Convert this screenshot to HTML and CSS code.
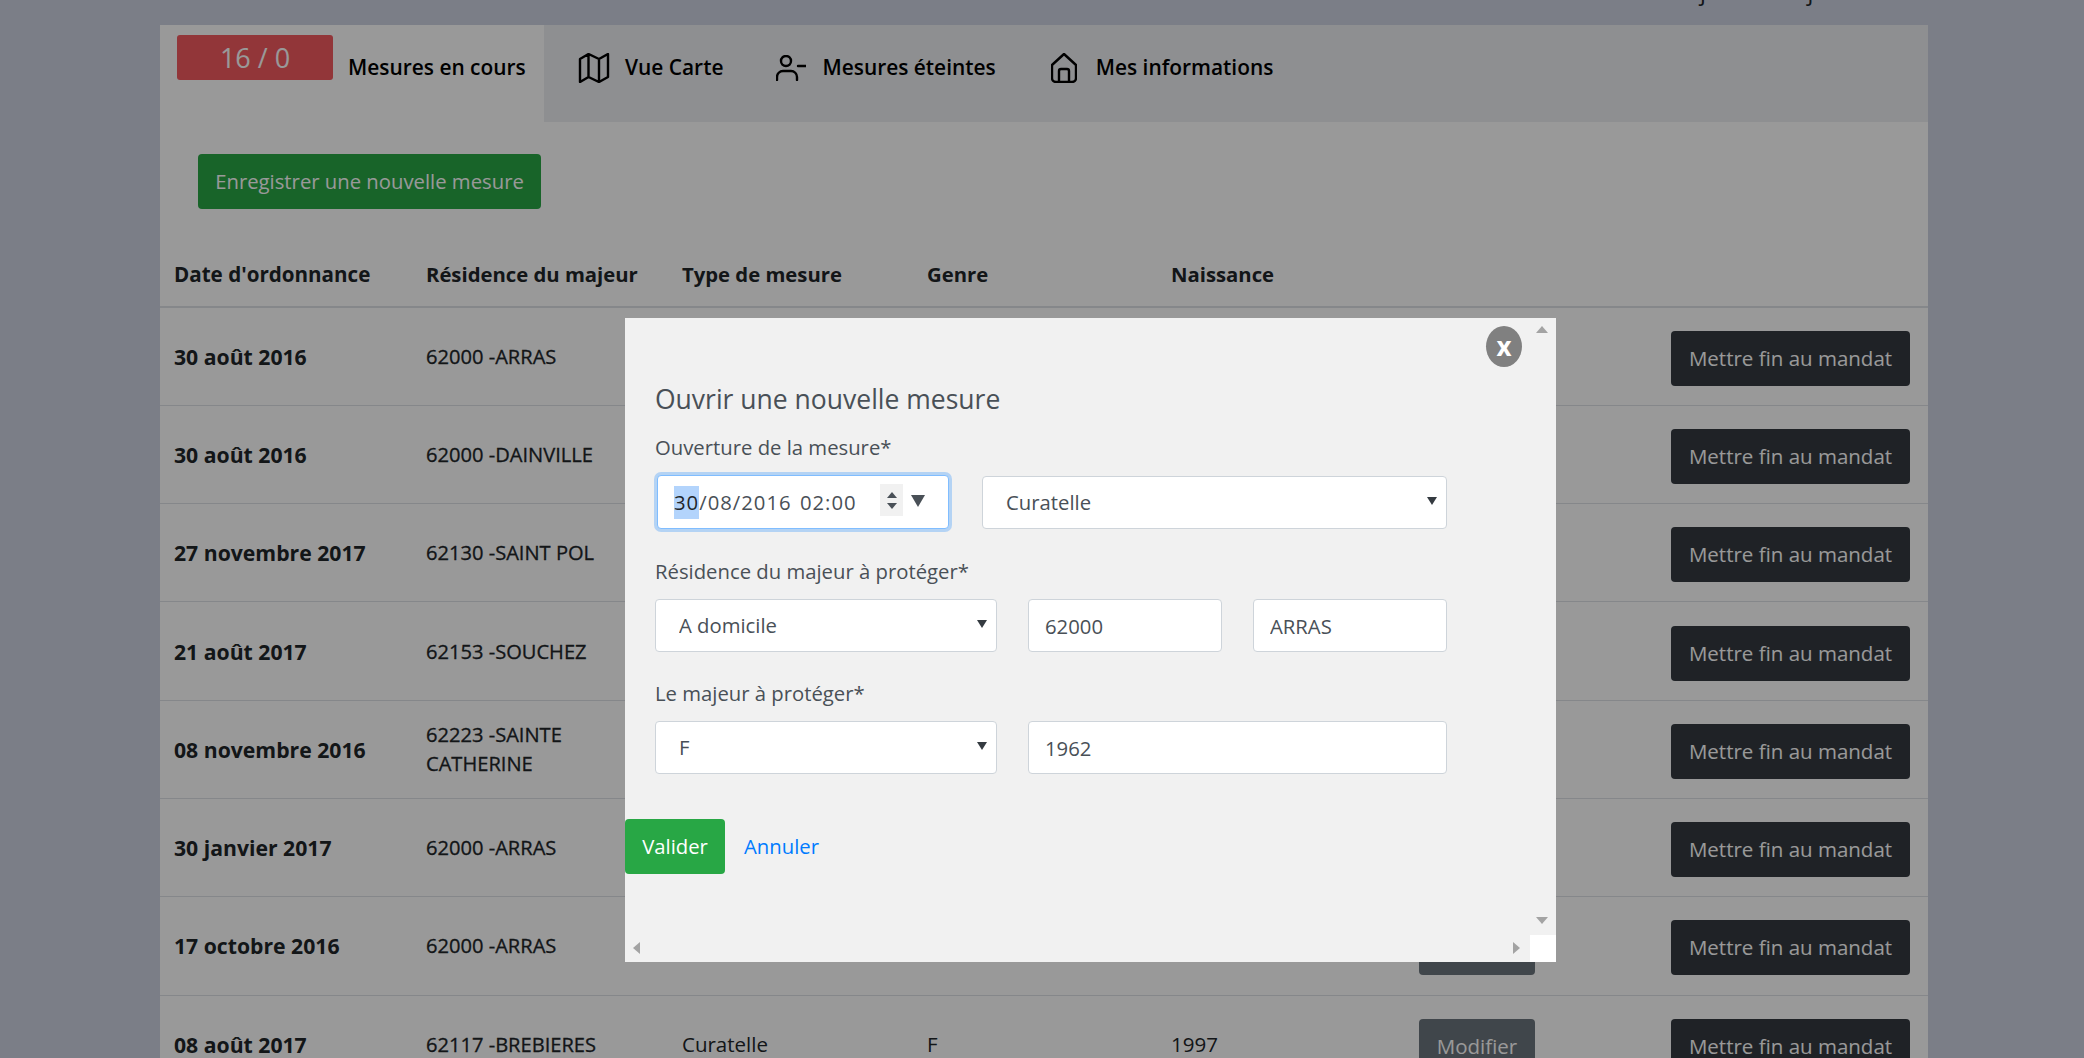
FILE: index.html
```html
<!DOCTYPE html>
<html lang="fr">
<head>
<meta charset="utf-8">
<title>Mesures en cours</title>
<link rel="stylesheet" href="styles.css">
</head>
<body>
<div class="updated"><span>Dernière mise à jour le 13 juillet 2018</span></div>
<main class="panel">
  <nav class="tabs">
    <div class="tab tab-active"><span class="badge">16 / 0</span><span class="tab-label">Mesures en cours</span></div>
    <div class="tab"><svg class="ico ico-map" viewBox="0 0 30 30"><path d="M1 6 9.500 1 20 6l9-5v23l-9 5-10.500-5L1 29zM9.500 1v23M20 6v23"/></svg><span class="tab-label">Vue Carte</span></div>
    <div class="tab"><svg class="ico ico-user" viewBox="0 0 30 26"><circle cx="10" cy="6" r="5"/><path d="M1 25v-3a6 6 0 0 1 6-6h8a6 6 0 0 1 6 6v3M22 11h8"/></svg><span class="tab-label">Mesures éteintes</span></div>
    <div class="tab"><svg class="ico ico-home" viewBox="0 0 26 30"><path d="M13 1 1 12v13a4 4 0 0 0 4 4h16a4 4 0 0 0 4-4V12zM8 29V18a2 2 0 0 1 2-2h6a2 2 0 0 1 2 2v11"/></svg><span class="tab-label">Mes informations</span></div>
  </nav>
  <div class="toolbar"><button class="btn btn-success">Enregistrer une nouvelle mesure</button></div>
  <table class="grid">
    <thead>
      <tr><th>Date d'ordonnance</th><th>Résidence du majeur</th><th>Type de mesure</th><th>Genre</th><th>Naissance</th><th></th><th></th></tr>
    </thead>
    <tbody>
      <tr><th>30 août 2016</th><td class="place">62000 -ARRAS</td><td>Curatelle</td><td>F</td><td>1962</td><td><button class="btn btn-secondary">Modifier</button></td><td><button class="btn btn-dark">Mettre fin au mandat</button></td></tr>
      <tr><th>30 août 2016</th><td class="place">62000 -DAINVILLE</td><td>Curatelle</td><td>F</td><td>1950</td><td><button class="btn btn-secondary">Modifier</button></td><td><button class="btn btn-dark">Mettre fin au mandat</button></td></tr>
      <tr><th>27 novembre 2017</th><td class="place">62130 -SAINT POL</td><td>Curatelle</td><td>H</td><td>1971</td><td><button class="btn btn-secondary">Modifier</button></td><td><button class="btn btn-dark">Mettre fin au mandat</button></td></tr>
      <tr><th>21 août 2017</th><td class="place">62153 -SOUCHEZ</td><td>Curatelle</td><td>F</td><td>1948</td><td><button class="btn btn-secondary">Modifier</button></td><td><button class="btn btn-dark">Mettre fin au mandat</button></td></tr>
      <tr><th>08 novembre 2016</th><td class="place">62223 -SAINTE CATHERINE</td><td>Curatelle</td><td>H</td><td>1983</td><td><button class="btn btn-secondary">Modifier</button></td><td><button class="btn btn-dark">Mettre fin au mandat</button></td></tr>
      <tr><th>30 janvier 2017</th><td class="place">62000 -ARRAS</td><td>Curatelle</td><td>F</td><td>1966</td><td><button class="btn btn-secondary">Modifier</button></td><td><button class="btn btn-dark">Mettre fin au mandat</button></td></tr>
      <tr><th>17 octobre 2016</th><td class="place">62000 -ARRAS</td><td>Curatelle</td><td>H</td><td>1959</td><td><button class="btn btn-secondary">Modifier</button></td><td><button class="btn btn-dark">Mettre fin au mandat</button></td></tr>
      <tr><th>08 août 2017</th><td class="place">62117 -BREBIERES</td><td>Curatelle</td><td>F</td><td>1997</td><td><button class="btn btn-secondary">Modifier</button></td><td><button class="btn btn-dark">Mettre fin au mandat</button></td></tr>
    </tbody>
  </table>
</main>
<div class="overlay"></div>
<section class="modal">
  <button class="close">x</button>
  <form class="modal-form">
    <h2 class="modal-title">Ouvrir une nouvelle mesure</h2>
    <label class="field-label">Ouverture de la mesure*</label>
    <div class="row row-first">
      <div class="date-field">
        <span class="date-text"><span class="date-sel">30</span>/08/2016 02:00</span>
        <span class="spin"><i class="tri-up"></i><i class="tri-down"></i></span>
        <i class="date-drop"></i>
      </div>
      <div class="select-wrap grow"><select class="control"><option>Curatelle</option></select></div>
    </div>
    <label class="field-label">Résidence du majeur à protéger*</label>
    <div class="row">
      <div class="select-wrap w-select"><select class="control"><option>A domicile</option></select></div>
      <input class="control input w-short" value="62000">
      <input class="control input w-short" value="ARRAS">
    </div>
    <label class="field-label">Le majeur à protéger*</label>
    <div class="row">
      <div class="select-wrap w-select"><select class="control"><option>F</option></select></div>
      <input class="control input grow" value="1962">
    </div>
  </form>
  <div class="modal-actions"><button class="btn btn-valid">Valider</button><a class="cancel" href="#">Annuler</a></div>
  <i class="sb sb-up"></i><i class="sb sb-down"></i><i class="sb sb-left"></i><i class="sb sb-right"></i><i class="sb-corner"></i>
</section>
</body>
</html>
```
FILE: styles.css
```css
* { box-sizing: border-box; }
html, body { height: 100%; }
body {
  margin: 0;
  height: 1058px;
  overflow: hidden;
  background: #cdd3e2;
  color: #212529;
  font-family: "Open Sans", "Noto Sans", sans-serif;
  font-size: 20.500px;
  line-height: 29px;
}
.updated { height: 25px; width: 1768px; margin-left: 160px; padding-right: 2px; display: flex; justify-content: flex-end; align-items: flex-start; overflow: hidden; font-size: 23.300px; }
.updated span { display: block; margin-top: -23px; white-space: nowrap; }
.panel { width: 1768px; margin-left: 160px; background: #fff; }
.tabs { height: 97px; display: flex; background: #edeef2; }
.tab { display: flex; align-items: flex-start; gap: 15px; padding-top: 28px; margin-right: 53px; font-size: 20.900px; font-weight: 600; color: #000; }
.tab-active { background: #fff; width: 384px; padding: 10px 0 0 17px; margin-right: 34px; gap: 15px; }
.tab-active .tab-label { margin-top: 18px; }
.tab:nth-child(3) { gap: 16px; margin-right: 55px; }
.tab:nth-child(4) { gap: 19px; }
.badge { width: 156px; height: 45px; border-radius: 3px; background: #f35a5f; color: #fff; font-size: 27px; font-weight: 400; line-height: 45px; text-align: center; }
.ico { fill: none; stroke: #000; stroke-width: 2.400; stroke-linejoin: round; stroke-linecap: round; }
.ico-map { width: 32px; height: 30px; }
.ico-user { width: 30px; height: 26px; margin-top: 2px; }
.ico-home { width: 26px; height: 30px; }
.toolbar { padding: 32px 38px 0; height: 121px; }
.btn { border: 1px solid transparent; border-radius: 4px; padding: 12px 17px; font: inherit; line-height: 29px; white-space: nowrap; height: 55px; color: #fff; }
.btn-success { background: #28a745; width: 343px; padding: 12px 0; font-size: 20.300px; }
.btn-secondary { background: #6c757d; width: 116px; padding: 12px 0; }
.btn-dark { background: #343a40; width: 239px; padding: 12px 0; }
.btn-valid { background: #28a745; width: 100px; padding: 12px 0; }
.grid { width: 1768px; border-collapse: collapse; table-layout: fixed; }
.grid th, .grid td { padding: 0 14px; text-align: left; vertical-align: middle; }
.grid thead th { height: 64px; border-bottom: 2px solid #dee2e6; font-size: 20.300px; font-weight: 700; }
.grid thead th:first-child { font-size: 20.600px; }
.grid tbody th, .grid tbody td { height: 98.300px; border-bottom: 1px solid #dee2e6; }
.grid tbody th { font-size: 21.200px; font-weight: 700; }
.grid .place { font-size: 20.100px; -webkit-text-stroke: .3px #212529; }
.grid .btn { margin-top: 4px; }
.grid th:nth-child(1) { width: 252px; }
.grid th:nth-child(2) { width: 256px; }
.grid th:nth-child(3) { width: 245px; }
.grid th:nth-child(4) { width: 244px; }
.grid th:nth-child(5) { width: 246px; }
.grid th:nth-child(6) { width: 252px; }
.grid td:nth-child(6) { padding: 0 16px; }
.grid td:nth-child(7) { padding: 0 18px 0 16px; text-align: right; }
.overlay { position: fixed; inset: 0; background: rgba(0, 0, 0, .4); }
.modal { position: fixed; left: 625px; top: 318px; width: 931px; height: 644px; background: #f1f1f1; color: #495057; font-size: 20.300px; }
.modal-form { padding: 61px 109px 0 30px; }
.modal-title { margin: 0 0 14px; font-size: 26.500px; line-height: 40px; font-weight: 400; color: #495057; }
.field-label { display: block; height: 29px; line-height: 29px; color: #495057; }
.row { display: flex; gap: 31px; margin: 13px 0 27px; align-items: center; }
.row-first { gap: 33px; margin: 13px 0 28px; }
.grow { flex: 1; }
.w-select { width: 342px; }
.control { display: block; width: 100%; height: 53px; padding: 0 16px 0 23px; border: 1px solid #ced4da; border-radius: 4px; background: #fff; color: #495057; font: inherit; appearance: none; }
.input { padding-left: 16px; }
.row .input.w-short { width: 194px; }
.row .input.grow { flex: 1; width: auto; }
.select-wrap { position: relative; }
.select-wrap::after { content: ""; position: absolute; right: 10px; top: 21px; border: 5px solid transparent; border-top: 8px solid #343a40; border-bottom: 0; }
.date-field { width: 292px; height: 54px; margin-left: 2px; display: flex; align-items: center; background: #fff; border: 1px solid #80bdff; border-radius: 4px; box-shadow: 0 0 0 3px rgba(0, 123, 255, .25); padding-left: 16px; }
.date-text { width: 206px; color: #495057; white-space: pre; letter-spacing: 1px; word-spacing: 2px; }
.date-sel { display: inline-block; background: #b3d4fc; color: #212529; height: 33px; line-height: 33px; }
.spin { width: 23px; height: 32px; margin-top: -4px; background: #f1f1f1; display: flex; flex-direction: column; align-items: center; justify-content: center; gap: 5px; }
.tri-up { border: 5px solid transparent; border-bottom: 6px solid #495057; border-top: 0; }
.tri-down { border: 5px solid transparent; border-top: 6px solid #495057; border-bottom: 0; }
.date-drop { margin-left: 8px; margin-top: -3px; border: 7px solid transparent; border-top: 12px solid #495057; border-bottom: 0; }
.modal-actions { display: flex; align-items: center; gap: 19px; margin-top: 45px; }
.cancel { color: #007bff; text-decoration: none; }
.close { position: absolute; left: 861px; top: 8px; width: 36px; height: 41px; padding: 0 0 2px; border: 0; border-radius: 50%; background: #808080; color: #fff; font: 700 26px/34px "Open Sans", sans-serif; }
.sb { position: absolute; width: 0; height: 0; border: 6px solid transparent; }
.sb-up { left: 911px; top: 8px; border-top: 0; border-bottom: 7px solid #a3a3a3; }
.sb-down { left: 911px; top: 599px; border-bottom: 0; border-top: 7px solid #a3a3a3; }
.sb-left { left: 8px; top: 624px; border-left: 0; border-right: 7px solid #a3a3a3; }
.sb-right { left: 888px; top: 624px; border-right: 0; border-left: 7px solid #a3a3a3; }
.sb-corner { position: absolute; right: 0; bottom: 0; width: 26px; height: 27px; background: #fff; }
```
